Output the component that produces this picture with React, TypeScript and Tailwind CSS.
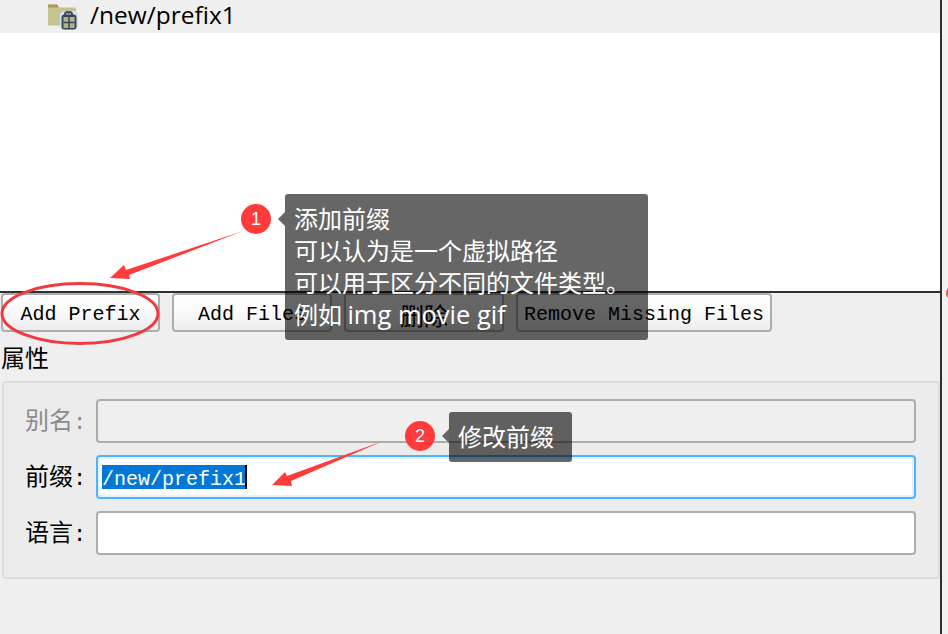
import React from "react";

const mono = "font-['Liberation_Mono','Noto_Sans_CJK_SC',monospace]";
const cjk = "font-['Noto_Sans_CJK_SC','Noto_Sans',sans-serif]";

function Btn({ w, children }: { w: string; children: React.ReactNode }) {
  return (
    <button className={`${w} h-[39px] shrink-0 rounded-[4px] border-2 border-[#adadad] bg-gradient-to-b from-white via-[#fafafa] to-[#ececec] text-[20px] leading-none text-black pt-[5px] ${mono} flex items-center justify-center`}>
      {children}
    </button>
  );
}

function Row({ label, disabled, children, focus }: { label: string; disabled?: boolean; focus?: boolean; children?: React.ReactNode }) {
  return (
    <div className="flex items-center h-[44px]">
      <div className={`w-[71px] text-[24px] leading-none ${cjk} ${disabled ? "text-[#8a8a8a]" : "text-black"}`}>
        {label}<span className={`${mono} text-[22px]`}>:</span>
      </div>
      <div className={`w-[820px] h-[44px] rounded-[4px] border-2 flex items-center px-[4px] ${focus ? "border-[#4db2ff] bg-white ring-2 ring-inset ring-[#e3f2ff]" : disabled ? "border-[#adadad] bg-[#efefef]" : "border-[#adadad] bg-white"}`}>
        {children}
      </div>
    </div>
  );
}

function Tip({ className, children }: { className: string; children: React.ReactNode }) {
  return (
    <div className={`absolute rounded-[3px] bg-[#000000]/60 text-white text-[24px] leading-[32px] ${cjk} ${className}`}>
      {children}
    </div>
  );
}

function Badge({ className, children }: { className: string; children: React.ReactNode }) {
  return (
    <div className={`absolute w-[30px] h-[30px] rounded-full bg-[#ff3b3b] text-white text-[18px] flex items-center justify-center font-['Liberation_Sans',sans-serif] ${className}`}>
      {children}
    </div>
  );
}

export default function App() {
  return (
    <div className="relative w-[948px] h-[634px] overflow-hidden bg-[#f0f0f0] flex">
      <div className="w-[942px] h-full border-r-2 border-[#2f2f2f] flex flex-col bg-[#efefef] shrink-0">
        <div className="h-[33px] flex items-start pl-[48px] shrink-0">
          <svg width="30" height="28" viewBox="0 0 30 28" className="shrink-0 mt-[2px]">
            <path d="M0 3.5C0 3 .5 2.5 1 2.5h8l2 3h16c.6 0 1 .4 1 1v17H1c-.6 0-1-.4-1-1z" fill="#c4c391" />
            <path d="M0 3.5C0 3 .5 2.5 1 2.5h8l2 3H0z" fill="#a89a5a" />
            <rect x="12" y="9" width="18" height="19" rx="4" fill="#cfe2f5" />
            <path d="M17 13v-1a2 2 0 0 1 3.5-1.2A2 2 0 0 1 24 12v1" fill="none" stroke="#3d4650" strokeWidth="2" />
            <rect x="13.5" y="12.5" width="15" height="15" rx="3" fill="#3d4650" />
            <rect x="15.5" y="15" width="11" height="11" fill="#a9b58f" />
            <path d="M15.5 20.5h11M21 15v11" stroke="#3d4650" strokeWidth="1.5" />
          </svg>
          <span className="ml-[12px] text-[24.5px] leading-[30px] text-black font-['Open_Sans',sans-serif]">/new/prefix1</span>
        </div>
        <div className="h-[258px] bg-white shrink-0" />
        <div className="h-[2px] bg-[#2f2f2f] shrink-0" />
        <div className="flex gap-[12px] pl-[1px] shrink-0">
          <Btn w="w-[159px]">Add Prefix</Btn>
          <Btn w="w-[160px]">Add Files</Btn>
          <Btn w="w-[160px]"><span className={`${cjk} text-[24px]`}>删除</span></Btn>
          <Btn w="w-[256px]">Remove Missing Files</Btn>
        </div>
        <div className={`h-[49px] pt-[11px] pl-[1px] text-[24px] leading-[28px] text-black shrink-0 ${cjk}`}>属性</div>
        <div className="ml-[2px] w-[938px] h-[198px] shrink-0 rounded-[3px] border-2 border-[#dcdcdc] bg-[#ececec] pl-[21px] pt-[16px] flex flex-col gap-[12px]">
          <Row label="别名" disabled />
          <Row label="前缀" focus>
            <span className="relative flex h-[24px] items-center pt-[5px] bg-[#0078d7] text-white text-[20px] leading-none font-['Liberation_Mono',monospace]">
              /new/prefix1
              <span className="absolute right-[-1px] top-0 h-[24px] w-[2px] bg-black" />
            </span>
          </Row>
          <Row label="语言" />
        </div>
      </div>

      <div className="absolute left-[946px] top-[286px] w-[14px] h-[14px] rounded-full bg-[#e8545c]" />

      <svg className="absolute left-0 top-0 pointer-events-none" width="948" height="634" viewBox="0 0 948 634">
        <ellipse cx="80" cy="313.5" rx="78" ry="30" fill="none" stroke="#ef3b3f" strokeWidth="3" />
        <polygon points="110,278 124,265 126,270 243,231 129,275 130,279" fill="#ff3b3b" />
        <polygon points="272,485 285,472 287,476 383,441 291,481 292,486" fill="#ff3b3b" />
      </svg>

      <Badge className="left-[241px] top-[204px]">1</Badge>
      <Tip className="left-[285px] top-[194px] w-[363px] h-[146px] pl-[9px] pt-[8px]">
        <div className="absolute left-[-7px] top-[18px] w-0 h-0 border-y-[7px] border-y-transparent border-r-[7px] border-r-[#666666]" />
        <div>添加前缀</div>
        <div>可以认为是一个虚拟路径</div>
        <div>可以用于区分不同的文件类型。</div>
        <div>例如 <span className="text-[25.5px] font-['Open_Sans',sans-serif]">img movie gif</span></div>
      </Tip>

      <Badge className="left-[405px] top-[421px]">2</Badge>
      <Tip className="left-[449px] top-[412px] w-[123px] h-[50px] pl-[9px] pt-[8px]">
        <div className="absolute left-[-7px] top-[17px] w-0 h-0 border-y-[7px] border-y-transparent border-r-[7px] border-r-[#666666]" />
        修改前缀
      </Tip>
    </div>
  );
}
